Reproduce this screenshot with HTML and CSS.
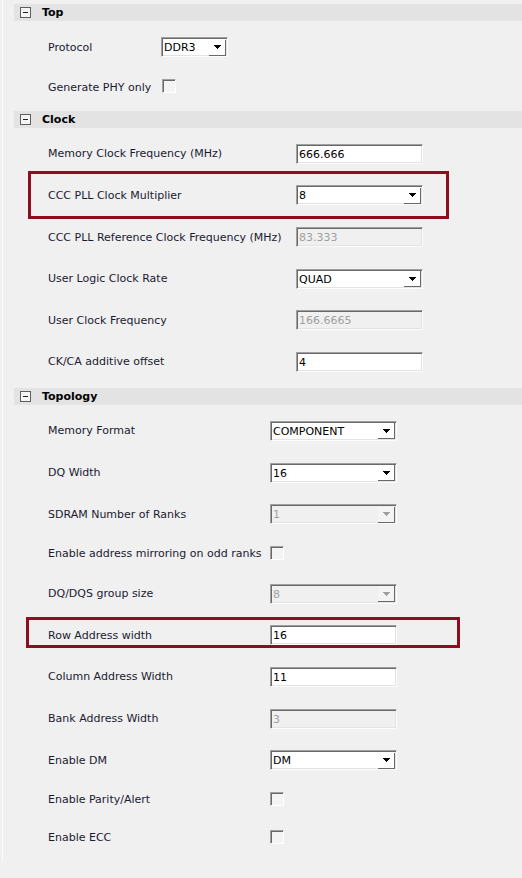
FILE: index.html
```html
<!DOCTYPE html>
<html>
<head>
<meta charset="utf-8">
<link rel="stylesheet" href="styles.css">
</head>
<body>
<div class="panel">
  <section class="sec sec-top">
    <div class="sec-head"><span class="toggle"></span><span class="sec-title">Top</span></div>
    <div class="sec-body">
      <div class="row"><span class="lbl">Protocol</span>
        <div class="field select small"><span class="val">DDR3</span><span class="btn"><svg width="7" height="4" viewBox="0 0 7 4"><path d="M0 0h7v1h-1v1h-1v1h-1v1h-1v-1h-1v-1h-1v-1h-1z"/></svg></span></div>
      </div>
      <div class="row cb"><span class="lbl">Generate PHY only</span><span class="check"></span></div>
    </div>
  </section>

  <section class="sec sec-clock">
    <div class="sec-head"><span class="toggle"></span><span class="sec-title">Clock</span></div>
    <div class="sec-body">
      <div class="row"><span class="lbl">Memory Clock Frequency (MHz)</span>
        <div class="field"><span class="val">666.666</span></div>
      </div>
      <div class="row hl hl-clock"><span class="lbl">CCC PLL Clock Multiplier</span>
        <div class="field select"><span class="val">8</span><span class="btn"><svg width="7" height="4" viewBox="0 0 7 4"><path d="M0 0h7v1h-1v1h-1v1h-1v1h-1v-1h-1v-1h-1v-1h-1z"/></svg></span></div>
      </div>
      <div class="row"><span class="lbl">CCC PLL Reference Clock Frequency (MHz)</span>
        <div class="field disabled"><span class="val">83.333</span></div>
      </div>
      <div class="row"><span class="lbl">User Logic Clock Rate</span>
        <div class="field select"><span class="val">QUAD</span><span class="btn"><svg width="7" height="4" viewBox="0 0 7 4"><path d="M0 0h7v1h-1v1h-1v1h-1v1h-1v-1h-1v-1h-1v-1h-1z"/></svg></span></div>
      </div>
      <div class="row"><span class="lbl">User Clock Frequency</span>
        <div class="field disabled"><span class="val">166.6665</span></div>
      </div>
      <div class="row"><span class="lbl">CK/CA additive offset</span>
        <div class="field"><span class="val">4</span></div>
      </div>
    </div>
  </section>

  <section class="sec sec-topo">
    <div class="sec-head"><span class="toggle"></span><span class="sec-title">Topology</span></div>
    <div class="sec-body">
      <div class="row"><span class="lbl">Memory Format</span>
        <div class="field select"><span class="val">COMPONENT</span><span class="btn"><svg width="7" height="4" viewBox="0 0 7 4"><path d="M0 0h7v1h-1v1h-1v1h-1v1h-1v-1h-1v-1h-1v-1h-1z"/></svg></span></div>
      </div>
      <div class="row"><span class="lbl">DQ Width</span>
        <div class="field select"><span class="val">16</span><span class="btn"><svg width="7" height="4" viewBox="0 0 7 4"><path d="M0 0h7v1h-1v1h-1v1h-1v1h-1v-1h-1v-1h-1v-1h-1z"/></svg></span></div>
      </div>
      <div class="row"><span class="lbl">SDRAM Number of Ranks</span>
        <div class="field select disabled"><span class="val">1</span><span class="btn"><svg width="7" height="4" viewBox="0 0 7 4"><path d="M0 0h7v1h-1v1h-1v1h-1v1h-1v-1h-1v-1h-1v-1h-1z"/></svg></span></div>
      </div>
      <div class="row cb"><span class="lbl">Enable address mirroring on odd ranks</span><span class="check"></span></div>
      <div class="row"><span class="lbl">DQ/DQS group size</span>
        <div class="field select disabled"><span class="val">8</span><span class="btn"><svg width="7" height="4" viewBox="0 0 7 4"><path d="M0 0h7v1h-1v1h-1v1h-1v1h-1v-1h-1v-1h-1v-1h-1z"/></svg></span></div>
      </div>
      <div class="row hl hl-topo"><span class="lbl">Row Address width</span>
        <div class="field"><span class="val">16</span></div>
      </div>
      <div class="row"><span class="lbl">Column Address Width</span>
        <div class="field"><span class="val">11</span></div>
      </div>
      <div class="row"><span class="lbl">Bank Address Width</span>
        <div class="field disabled"><span class="val">3</span></div>
      </div>
      <div class="row"><span class="lbl">Enable DM</span>
        <div class="field select"><span class="val">DM</span><span class="btn"><svg width="7" height="4" viewBox="0 0 7 4"><path d="M0 0h7v1h-1v1h-1v1h-1v1h-1v-1h-1v-1h-1v-1h-1z"/></svg></span></div>
      </div>
      <div class="row cb"><span class="lbl">Enable Parity/Alert</span><span class="check"></span></div>
      <div class="row cb"><span class="lbl">Enable ECC</span><span class="check"></span></div>
    </div>
  </section>
</div>
</body>
</html>
```

FILE: styles.css
```css
html, body {
  margin: 0;
  padding: 0;
  background: #f0f0f0;
}

body {
  font-family: "DejaVu Sans", Verdana, sans-serif;
  font-size: 11px;
  color: #1a1a30;
}

.panel {
  margin-left: 2px;
  border-left: 1px solid #fbfbfb;
  padding-top: 4px;
  padding-bottom: 5px;
}

.sec-head {
  margin-left: 11px;
  height: 17px;
  background: #e3e3e3;
  display: flex;
  align-items: center;
  padding-left: 6px;
}

.toggle {
  width: 11px;
  height: 11px;
  box-sizing: border-box;
  border: 1px solid #5f5f5f;
  background: #f4f4f4;
  position: relative;
  margin-right: 11px;
}

.toggle::before {
  content: "";
  position: absolute;
  left: 2px;
  top: 4px;
  width: 5px;
  height: 1px;
  background: #222;
}

.sec-title {
  font-weight: bold;
  color: #000;
}

.sec-body {
  padding-top: 5.5px;
  padding-bottom: 4.5px;
}

.sec-clock .sec-body {
  padding-bottom: 5px;
}

.sec-topo .sec-body {
  padding-top: 5.5px;
  padding-bottom: 0;
}

.row {
  height: 41.6px;
  display: grid;
  grid-template-columns: var(--lw) auto;
  align-items: center;
  justify-items: start;
  padding-left: 45px;
  position: relative;
}

.row.cb {
  height: 38px;
}

.sec-top { --lw: 113px; }
.sec-clock { --lw: 248px; }
.sec-topo { --lw: 222px; }

.lbl {
  white-space: nowrap;
}

.field {
  width: 127px;
  height: 20px;
  box-sizing: border-box;
  background: #fff;
  border: 1px solid;
  border-color: #a0a0a0 #fcfcfc #fcfcfc #a0a0a0;
  box-shadow: inset 1px 1px 0 #696969, inset -1px -1px 0 #e3e3e3;
  display: flex;
  align-items: center;
  color: #000;
}

.field.small {
  width: 67px;
}

.val {
  padding-left: 2px;
  padding-top: 1px;
}

.field.disabled {
  background: #f0f0f0;
  color: #a0a0a0;
}

.btn {
  margin-left: auto;
  margin-right: 1px;
  width: 17px;
  height: 16px;
  box-sizing: border-box;
  background: #fff;
  border-right: 1px solid #696969;
  border-bottom: 1px solid #696969;
  display: flex;
  align-items: center;
  justify-content: center;
  margin-top: 1px;
}

.btn svg {
  display: block;
  fill: #000;
}

.field.disabled .btn {
  background: #f4f4f4;
}

.field.disabled .btn svg {
  fill: #a0a0a0;
}

.check {
  width: 14px;
  height: 14px;
  box-sizing: border-box;
  border: 1px solid;
  border-color: #a0a0a0 #fff #fff #a0a0a0;
  box-shadow: inset 1px 1px 0 #696969;
  background: #f4f4f4;
  margin-top: -2px;
}

.sec-top .check {
  margin-left: 1px;
}

.hl::after {
  content: "";
  position: absolute;
  border: 3px solid #8c0f1f;
  box-sizing: border-box;
  pointer-events: none;
}

.hl-clock::after {
  left: 25px;
  top: -4px;
  width: 421px;
  height: 48px;
}

.hl-topo::after {
  left: 23px;
  top: 2px;
  width: 434px;
  height: 31px;
}
```
